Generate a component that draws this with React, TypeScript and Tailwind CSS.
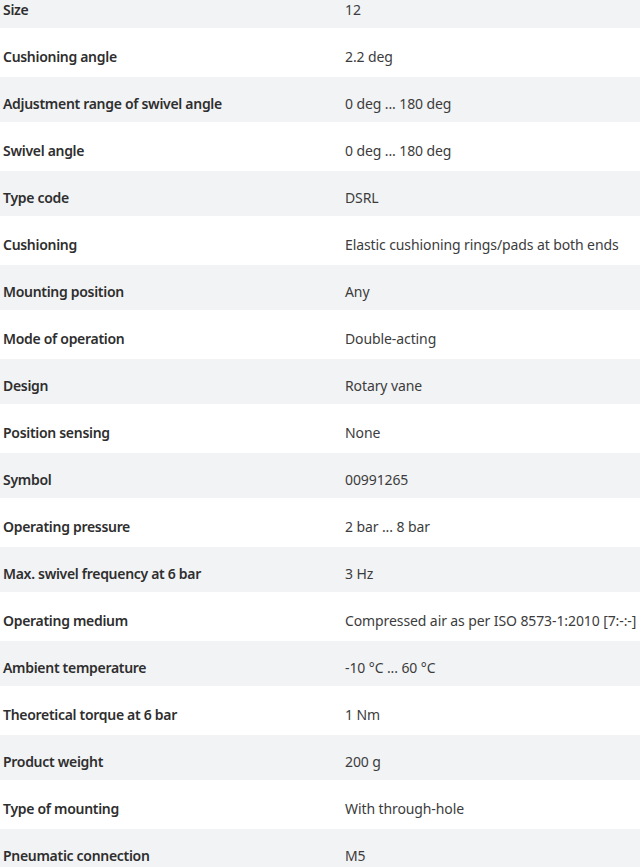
import React from "react";

const rows: [string, string][] = [
  ["Size", "12"],
  ["Cushioning angle", "2.2 deg"],
  ["Adjustment range of swivel angle", "0 deg ... 180 deg"],
  ["Swivel angle", "0 deg ... 180 deg"],
  ["Type code", "DSRL"],
  ["Cushioning", "Elastic cushioning rings/pads at both ends"],
  ["Mounting position", "Any"],
  ["Mode of operation", "Double-acting"],
  ["Design", "Rotary vane"],
  ["Position sensing", "None"],
  ["Symbol", "00991265"],
  ["Operating pressure", "2 bar ... 8 bar"],
  ["Max. swivel frequency at 6 bar", "3 Hz"],
  ["Operating medium", "Compressed air as per ISO 8573-1:2010 [7:-:-]"],
  ["Ambient temperature", "-10 °C ... 60 °C"],
  ["Theoretical torque at 6 bar", "1 Nm"],
  ["Product weight", "200 g"],
  ["Type of mounting", "With through-hole"],
  ["Pneumatic connection", "M5"],
];

export default function App() {
  return (
    <div
      className="w-[640px] h-[867px] overflow-hidden bg-white text-[14px] text-[#333333]"
      style={{ fontFamily: '"Noto Sans", "Open Sans", sans-serif' }}
    >
      <div className="-mt-[17px] flex flex-col">
        {rows.map(([k, v], i) => (
          <div
            key={k}
            className={
              i % 2 === 0
                ? "flex items-center h-[45px] bg-[#f2f3f5] pt-[8px]"
                : "flex items-center h-[49px] bg-white pt-[8px]"
            }
          >
            <div className="w-[345px] pl-[3px] font-semibold tracking-[-0.3px] text-[#2e2e2e] whitespace-nowrap">
              {k}
            </div>
            <div className="flex-1 text-[#3c3c3c] tracking-[-0.1px] whitespace-nowrap">{v}</div>
          </div>
        ))}
      </div>
    </div>
  );
}
